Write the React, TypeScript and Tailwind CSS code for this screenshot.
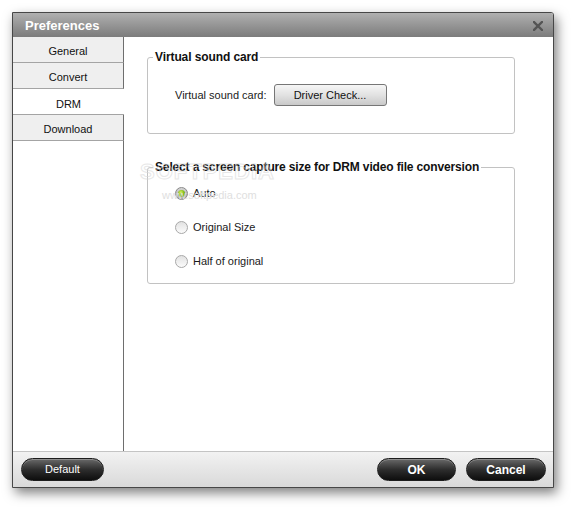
import React from "react";

const font = { fontFamily: '"Liberation Sans", Arial, sans-serif' };

function Radio({ checked, label }: { checked?: boolean; label: string }) {
  return (
    <div className="flex h-[20px] items-center gap-[5px]">
      {checked ? (
        <div className="flex h-[13px] w-[13px] items-center justify-center rounded-full border border-[#8a8a8a] bg-gradient-to-b from-[#d6d6d6] to-[#a8a8a8]">
          <div className="h-[7px] w-[7px] rounded-full bg-[radial-gradient(circle_at_40%_35%,#d8f070_0%,#8cc21a_45%,#4f8a08_100%)]" />
        </div>
      ) : (
        <div className="h-[13px] w-[13px] rounded-full border border-[#a8a8a8] bg-gradient-to-b from-[#e2e2e2] to-[#fbfbfb]" />
      )}
      <span className="text-[11px] leading-none text-[#1a1a1a]">{label}</span>
    </div>
  );
}

function DarkButton({ label, bold, w }: { label: string; bold?: boolean; w: string }) {
  return (
    <button
      className={`flex h-[23px] ${w} items-center justify-center rounded-full border border-[#1c1c1c] bg-gradient-to-b from-[#6a6a6a] via-[#2e2e2e] to-[#0e0e0e] text-white shadow-[inset_0_1px_0_rgba(255,255,255,0.25)] ${bold ? "text-[12px] font-bold" : "text-[11px]"}`}
    >
      {label}
    </button>
  );
}

export default function App() {
  return (
    <div className="h-[509px] w-[574px] bg-white pl-[12px] pt-[12px]" style={font}>
      <div className="relative flex h-[476px] w-[542px] flex-col rounded-tr-[3px] border border-[#474747] bg-white shadow-[3px_5px_12px_rgba(0,0,0,0.5)]">
        {/* title bar */}
        <div className="flex h-[24px] items-center justify-between rounded-tr-[2px] bg-gradient-to-b from-[#b0b0b0] to-[#7c7c7c] pl-[12px] pr-[10px]">
          <span className="text-[13px] font-bold leading-none text-white">Preferences</span>
          <svg width="10" height="10" viewBox="0 0 10 10" className="mt-[1px]">
            <path d="M1 1L9 9M9 1L1 9" stroke="#545454" strokeWidth="2.4" strokeLinecap="square" />
          </svg>
        </div>
        {/* body */}
        <div className="flex flex-1">
          <div className="flex w-[111px] flex-col text-[11px] text-[#111]">
            <div className="flex h-[26px] items-center justify-center border-b border-r border-b-[#a4a4a4] border-r-[#6e6e6e] bg-[#efefef] pt-[4px]">General</div>
            <div className="flex h-[26px] items-center justify-center border-b border-r border-b-[#a4a4a4] border-r-[#6e6e6e] bg-[#efefef] pt-[4px]">Convert</div>
            <div className="flex h-[26px] items-center justify-center border-b border-b-[#a4a4a4] bg-white pt-[6px]">DRM</div>
            <div className="flex h-[26px] items-center justify-center border-b border-r border-b-[#a4a4a4] border-r-[#6e6e6e] bg-[#efefef] pt-[4px]">Download</div>
            <div className="flex-1 border-r border-r-[#6e6e6e]" />
          </div>
          <div className="relative flex-1 pl-[23px] pt-[14px]">
            <fieldset className="h-[83px] w-[368px] rounded-[3px] border border-[#c2c2c2]">
              <legend className="ml-[5px] px-[2px] text-[12px] font-bold leading-[12px] tracking-[-0.1px] text-[#111]">Virtual sound card</legend>
              <div className="flex items-center pl-[27px] pt-[21px]">
                <span className="text-[11px] text-[#1a1a1a]">Virtual sound card:</span>
                <button className="ml-[7px] flex h-[22px] w-[113px] items-center justify-center rounded-[3px] border border-[#767676] bg-gradient-to-b from-[#f6f6f6] via-[#e2e2e2] to-[#c9c9c9] text-[11px] text-[#111]">
                  Driver Check...
                </button>
              </div>
            </fieldset>
            <fieldset className="mt-[27px] h-[123px] w-[368px] rounded-[3px] border border-[#c2c2c2]">
              <legend className="ml-[5px] px-[2px] text-[12px] font-bold leading-[12px] tracking-[-0.15px] text-[#111]">Select a screen capture size for DRM video file conversion</legend>
              <div className="flex flex-col gap-[14px] pl-[27px] pt-[10px]">
                <Radio checked label="Auto" />
                <Radio label="Original Size" />
                <Radio label="Half of original" />
              </div>
            </fieldset>
            {/* watermark */}
            <div className="pointer-events-none absolute left-[16px] top-[118px] text-[22px] font-bold tracking-[1px] text-transparent opacity-60 [-webkit-text-stroke:1px_#d8d8d8]">SOFTPEDIA</div>
            <div className="pointer-events-none absolute left-[38px] top-[150px] text-[11px] text-[#e0e0e0]">www.softpedia.com</div>
          </div>
        </div>
        {/* footer */}
        <div className="flex h-[36px] items-center justify-between border-t border-[#c4c4c4] bg-gradient-to-b from-[#f2f2f2] to-[#d9d9d9] pl-[8px] pr-[7px]">
          <DarkButton label="Default" w="w-[83px]" />
          <div className="flex gap-[10px]">
            <DarkButton label="OK" bold w="w-[79px]" />
            <DarkButton label="Cancel" bold w="w-[80px]" />
          </div>
        </div>
      </div>
    </div>
  );
}
